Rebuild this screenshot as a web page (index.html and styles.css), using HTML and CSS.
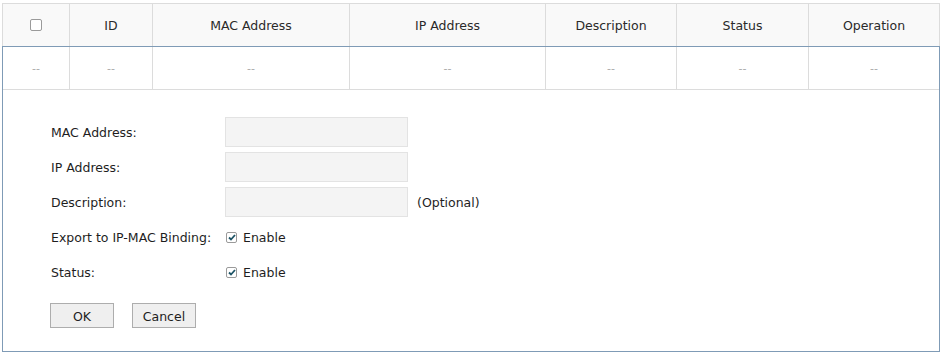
FILE: index.html
```html
<!DOCTYPE html>
<html lang="en">
<head>
  <meta charset="UTF-8" />
  <title>IP-MAC Binding</title>
  <link rel="stylesheet" href="styles.css">
</head>
<body>
  <div class="panel">
    <div class="grid grid-head">
      <div class="cell"><span class="box-check"></span></div>
      <div class="cell">ID</div>
      <div class="cell">MAC Address</div>
      <div class="cell">IP Address</div>
      <div class="cell">Description</div>
      <div class="cell">Status</div>
      <div class="cell">Operation</div>
    </div>

    <div class="body-box">
      <div class="grid grid-row">
        <div class="cell">--</div>
        <div class="cell">--</div>
        <div class="cell">--</div>
        <div class="cell">--</div>
        <div class="cell">--</div>
        <div class="cell">--</div>
        <div class="cell">--</div>
      </div>

      <form class="edit-form" onsubmit="return false">
        <div class="form-row">
          <label class="form-label">MAC Address:</label>
          <input class="text-input" type="text">
        </div>
        <div class="form-row">
          <label class="form-label">IP Address:</label>
          <input class="text-input" type="text">
        </div>
        <div class="form-row">
          <label class="form-label">Description:</label>
          <input class="text-input" type="text">
          <span class="hint">(Optional)</span>
        </div>
        <div class="form-row">
          <label class="form-label">Export to IP-MAC Binding:</label>
          <span class="check-mark">
            <svg width="8" height="7" viewBox="0 0 8 7"><path d="M1 3.5 L3 5.5 L7 1" fill="none" stroke="#1d5466" stroke-width="1.8"/></svg>
          </span>
          <span class="check-text">Enable</span>
        </div>
        <div class="form-row">
          <label class="form-label">Status:</label>
          <span class="check-mark">
            <svg width="8" height="7" viewBox="0 0 8 7"><path d="M1 3.5 L3 5.5 L7 1" fill="none" stroke="#1d5466" stroke-width="1.8"/></svg>
          </span>
          <span class="check-text">Enable</span>
        </div>
        <div class="buttons">
          <button class="btn" type="button">OK</button>
          <button class="btn" type="button">Cancel</button>
        </div>
      </form>
    </div>
  </div>
</body>
</html>
```

FILE: styles.css
```css
body {
  margin: 0;
  padding: 0;
  background: #fff;
  font-family: "DejaVu Sans", Verdana, sans-serif;
  font-size: 12.5px;
  color: #1e1e1e;
}

.panel {
  margin: 3px 0 0 2px;
  width: 938px;
}

/* table grid */
.grid {
  display: grid;
  grid-template-columns: 67px 83px 197px 196px 131px 132px 1fr;
}

.grid .cell {
  box-sizing: border-box;
  display: flex;
  align-items: center;
  justify-content: center;
  border-right: 1px solid #dcdcdc;
}

.grid-head {
  border-top: 1px solid #dcdcdc;
  border-left: 1px solid #dcdcdc;
  background: #f9f9f9;
}

.grid-head .cell {
  height: 42px;
  padding-top: 0;
  color: #2a2a2a;
}

.box-check {
  display: inline-block;
  width: 10px;
  height: 10px;
  border: 1px solid #9a9a9a;
  border-radius: 2px;
  background: #fff;
  margin: 0 0 0 -1px;
}

.body-box {
  box-sizing: border-box;
  border: 1px solid #7f9bb6;
  height: 306px;
}

.grid-row .cell {
  height: 43px;
  border-bottom: 1px solid #dcdcdc;
  color: #aaa;
  font-size: 11px;
  padding-top: 1px;
}

.grid-row .cell:last-child {
  border-right: none;
}

/* form */
.edit-form {
  margin: 0;
  padding: 27px 0 0 48px;
}

.form-row {
  display: flex;
  align-items: center;
  height: 30px;
  margin-bottom: 5px;
}

.form-label {
  width: 174px;
  flex: none;
  padding-top: 1px;
}

.text-input {
  box-sizing: border-box;
  width: 183px;
  height: 30px;
  margin: 0;
  border: 1px solid #e3e3e3;
  background: #f4f4f4;
  outline: none;
}

.hint {
  margin-left: 9px;
  padding-top: 1px;
}

.check-mark {
  box-sizing: border-box;
  display: inline-flex;
  align-items: center;
  justify-content: center;
  width: 11px;
  height: 11px;
  margin: 1px 0 0 1px;
  border: 1px solid #9a9a9a;
  border-radius: 2px;
  background: #fff;
}

.check-text {
  margin-left: 6px;
  padding-top: 1px;
}

.buttons {
  display: flex;
  gap: 18px;
  margin: 16px 0 0 -1px;
}

.btn {
  box-sizing: border-box;
  width: 64px;
  height: 25px;
  padding: 1px 0 0;
  border: 1px solid #adadad;
  background: #efefef;
  font-family: inherit;
  font-size: 12.5px;
  color: #1e1e1e;
}
```
